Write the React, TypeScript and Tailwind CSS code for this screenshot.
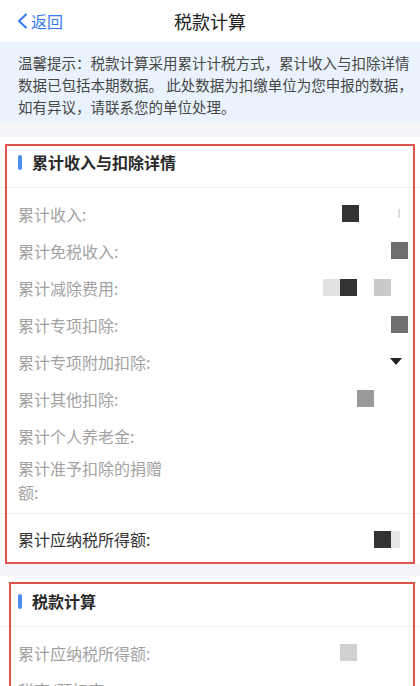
import React from 'react';

const font = { fontFamily: '"Noto Sans CJK SC", "Noto Sans", sans-serif' };

function Block({ tone, className = '' }: { tone: string; className?: string }) {
  return <span className={`block h-[17px] w-[17px] ${tone} ${className}`} />;
}

function Row({
  label,
  dark = false,
  tall = false,
  children,
}: {
  label: React.ReactNode;
  dark?: boolean;
  tall?: boolean;
  children?: React.ReactNode;
}) {
  return (
    <div className={`flex items-center pl-[18px] pr-[12px] ${tall ? 'h-[52px]' : 'h-[37px]'}`}>
      <div
        className={`w-[150px] text-[16px] ${tall ? 'leading-[24px]' : 'leading-[22px]'} ${
          dark ? 'text-[#333333]' : 'text-[#a2a2a2]'
        }`}
      >
        {label}
      </div>
      <div className="flex flex-1 items-center justify-end">{children}</div>
    </div>
  );
}

function SectionHeader({ title }: { title: string }) {
  return (
    <div className="flex h-[51px] items-center border-b border-[#efefef] pl-[18px]">
      <span className="mr-[10px] block h-[15px] w-[4px] rounded-full bg-[#4a8ef0]" />
      <span className="text-[16px] font-bold text-[#2a2a2a]">{title}</span>
    </div>
  );
}

export default function App() {
  return (
    <div className="relative h-[686px] w-[420px] overflow-hidden bg-[#f3f5f8]" style={font}>
      {/* nav bar */}
      <div className="relative flex h-[42px] items-center bg-white">
        <div className="flex items-center pl-[16px] text-[#3478f6]">
          <svg width="12" height="16" viewBox="0 0 12 16" fill="none">
            <path d="M10 1.5 L3 8 L10 14.5" stroke="#3478f6" strokeWidth="2" strokeLinecap="round" strokeLinejoin="round" />
          </svg>
          <span className="ml-[3px] text-[16px]">返回</span>
        </div>
        <div className="absolute inset-x-0 top-0 flex h-[42px] items-center justify-center text-[18px] text-[#222222] pointer-events-none">
          税款计算
        </div>
      </div>

      {/* notice */}
      <div className="bg-[#eaf3fd] px-[18px] pt-[10px] pb-[4px] text-[14.5px] leading-[22px] text-[#474747]">
        <div className="whitespace-nowrap">温馨提示：税款计算采用累计计税方式，累计收入与扣除详情</div>
        <div className="whitespace-nowrap">数据已包括本期数据。 此处数据为扣缴单位为您申报的数据，</div>
        <div className="whitespace-nowrap">如有异议，请联系您的单位处理。</div>
      </div>

      {/* section 1 */}
      <div className="mt-[15px] bg-white">
        <SectionHeader title="累计收入与扣除详情" />
        <div className="pt-[7px]">
          <Row label="累计收入:">
            <Block tone="bg-[#333333]" />
            <span className="ml-[39px] mr-[8px] block h-[9px] w-[2px] bg-[#dcdcdc]" />
          </Row>
          <Row label="累计免税收入:">
            <Block tone="bg-[#6f6f6f]" />
          </Row>
          <Row label="累计减除费用:">
            <Block tone="bg-[#e2e2e2]" />
            <Block tone="bg-[#333333]" />
            <Block tone="bg-[#c9c9c9]" className="ml-[17px] mr-[17px]" />
          </Row>
          <Row label="累计专项扣除:">
            <Block tone="bg-[#707070]" />
          </Row>
          <Row label="累计专项附加扣除:">
            <span className="mr-[6px] block h-0 w-0 border-l-[6px] border-r-[6px] border-t-[7px] border-l-transparent border-r-transparent border-t-[#222222]" />
          </Row>
          <Row label="累计其他扣除:">
            <Block tone="bg-[#9a9a9a]" className="mr-[34px]" />
          </Row>
          <Row label="累计个人养老金:" />
          <Row label="累计准予扣除的捐赠额:" tall />
        </div>
        <div className="mt-[7px] border-t border-[#efefef]">
          <div className="flex h-[50px] items-center pl-[18px] pr-[12px]">
            <div className="text-[16px] text-[#333333]">累计应纳税所得额:</div>
            <div className="flex flex-1 items-center justify-end">
              <Block tone="bg-[#333333]" />
              <span className="mr-[8px] block h-[17px] w-[9px] bg-[#e6e6e6]" />
            </div>
          </div>
        </div>
      </div>

      {/* section 2 */}
      <div className="mt-[12px] bg-white">
        <SectionHeader title="税款计算" />
        <div className="pt-[7px]">
          <Row label="累计应纳税所得额:">
            <Block tone="bg-[#d0d0d0]" className="mr-[51px]" />
          </Row>
          <Row label="税率/预扣率:" />
        </div>
      </div>

      {/* red annotation boxes */}
      <div className="pointer-events-none absolute left-[5px] top-[144px] h-[420px] w-[410px] border-2 border-[#e0544f]" />
      <div className="pointer-events-none absolute left-[9px] top-[582px] h-[200px] w-[406px] border-2 border-[#e0544f]" />
    </div>
  );
}
